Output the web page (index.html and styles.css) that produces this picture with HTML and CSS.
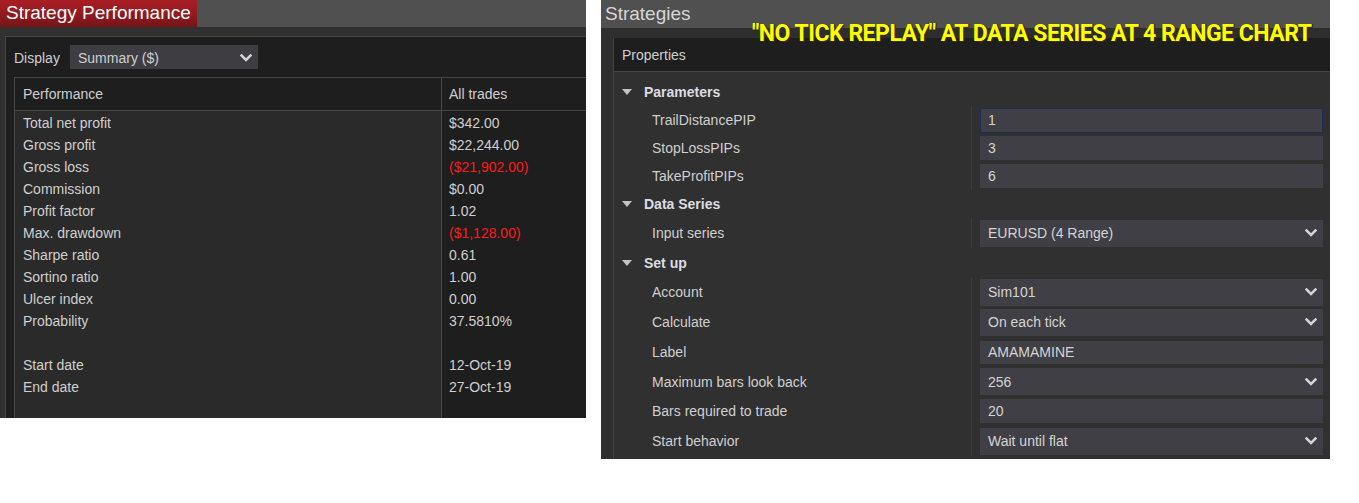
FILE: index.html
```html
<!DOCTYPE html>
<html>
<head>
<meta charset="utf-8">
<link rel="stylesheet" href="styles.css">
</head>
<body>
<div class="page">
  <section class="perf">
    <div class="titlebar"><div class="tab">Strategy Performance</div></div>
    <div class="perf-frame">
      <div class="display-row">
        <span class="display-label">Display</span>
        <div class="select">
          <span>Summary ($)</span>
          <svg class="chev" viewBox="0 0 12 8" width="12" height="8"><polyline points="1.5,1.5 6,6 10.5,1.5"/></svg>
        </div>
      </div>
      <div class="table">
        <div class="thead">
          <div class="th c1">Performance</div>
          <div class="th c2">All trades</div>
        </div>
        <div class="tbody">
          <div class="col c1">
            <div class="cell">Total net profit</div>
            <div class="cell">Gross profit</div>
            <div class="cell">Gross loss</div>
            <div class="cell">Commission</div>
            <div class="cell">Profit factor</div>
            <div class="cell">Max. drawdown</div>
            <div class="cell">Sharpe ratio</div>
            <div class="cell">Sortino ratio</div>
            <div class="cell">Ulcer index</div>
            <div class="cell">Probability</div>
            <div class="cell"></div>
            <div class="cell">Start date</div>
            <div class="cell">End date</div>
          </div>
          <div class="col c2">
            <div class="cell">$342.00</div>
            <div class="cell">$22,244.00</div>
            <div class="cell neg">($21,902.00)</div>
            <div class="cell">$0.00</div>
            <div class="cell">1.02</div>
            <div class="cell neg">($1,128.00)</div>
            <div class="cell">0.61</div>
            <div class="cell">1.00</div>
            <div class="cell">0.00</div>
            <div class="cell">37.5810%</div>
            <div class="cell"></div>
            <div class="cell">12-Oct-19</div>
            <div class="cell">27-Oct-19</div>
          </div>
        </div>
      </div>
    </div>
  </section>

  <section class="strats">
    <div class="titlebar strats-title">Strategies</div>
    <div class="note">"NO TICK REPLAY" AT DATA SERIES AT 4 RANGE CHART</div>
    <div class="props-frame">
      <div class="props-head">Properties</div>
      <div class="props-body">
        <div class="ghead h28"><svg class="tri" viewBox="0 0 10 6" width="10" height="6"><polygon points="0,0 10,0 5,6"/></svg><span>Parameters</span></div>
        <div class="group">
          <div class="prow h28"><div class="plabel">TrailDistancePIP</div><div class="pval"><div class="box focus">1</div></div></div>
          <div class="prow h28"><div class="plabel">StopLossPIPs</div><div class="pval"><div class="box">3</div></div></div>
          <div class="prow h28"><div class="plabel">TakeProfitPIPs</div><div class="pval"><div class="box">6</div></div></div>
        </div>
        <div class="ghead h28"><svg class="tri" viewBox="0 0 10 6" width="10" height="6"><polygon points="0,0 10,0 5,6"/></svg><span>Data Series</span></div>
        <div class="group">
          <div class="prow h30"><div class="plabel">Input series</div><div class="pval"><div class="box tall"><span>EURUSD (4 Range)</span><svg class="chev" viewBox="0 0 12 8" width="12" height="8"><polyline points="1.5,1.5 6,6 10.5,1.5"/></svg></div></div></div>
        </div>
        <div class="ghead h29"><svg class="tri" viewBox="0 0 10 6" width="10" height="6"><polygon points="0,0 10,0 5,6"/></svg><span>Set up</span></div>
        <div class="group">
          <div class="prow h30"><div class="plabel">Account</div><div class="pval"><div class="box tall"><span>Sim101</span><svg class="chev" viewBox="0 0 12 8" width="12" height="8"><polyline points="1.5,1.5 6,6 10.5,1.5"/></svg></div></div></div>
          <div class="prow h30"><div class="plabel">Calculate</div><div class="pval"><div class="box tall"><span>On each tick</span><svg class="chev" viewBox="0 0 12 8" width="12" height="8"><polyline points="1.5,1.5 6,6 10.5,1.5"/></svg></div></div></div>
          <div class="prow h30"><div class="plabel">Label</div><div class="pval"><div class="box short">AMAMAMINE</div></div></div>
          <div class="prow h29"><div class="plabel">Maximum bars look back</div><div class="pval"><div class="box tall"><span>256</span><svg class="chev" viewBox="0 0 12 8" width="12" height="8"><polyline points="1.5,1.5 6,6 10.5,1.5"/></svg></div></div></div>
          <div class="prow h30"><div class="plabel">Bars required to trade</div><div class="pval"><div class="box">20</div></div></div>
          <div class="prow h30"><div class="plabel">Start behavior</div><div class="pval"><div class="box tall"><span>Wait until flat</span><svg class="chev" viewBox="0 0 12 8" width="12" height="8"><polyline points="1.5,1.5 6,6 10.5,1.5"/></svg></div></div></div>
        </div>
      </div>
    </div>
  </section>
</div>
</body>
</html>
```

FILE: styles.css
```css
* { box-sizing: border-box; }

body {
  margin: 0;
  background: #ffffff;
  font-family: "Liberation Sans", Arial, sans-serif;
  font-size: 14px;
  color: #cfcfcf;
}

.page {
  display: flex;
  align-items: flex-start;
  gap: 15px;
}

/* ---------- Strategy Performance ---------- */
.perf {
  width: 586px;
  height: 418px;
  background: #313131;
  display: flex;
  flex-direction: column;
  overflow: hidden;
}

.titlebar {
  flex: none;
  height: 27px;
  background: #505050;
  display: flex;
}

.tab {
  width: 197px;
  height: 27px;
  background: linear-gradient(#a91e24 0%, #921a1f 50%, #761418 100%);
  color: #ffffff;
  font-size: 19px;
  line-height: 26px;
  padding-left: 6px;
  white-space: nowrap;
}

.perf-frame {
  flex: 1;
  margin: 9px 0 0 5px;
  border-top: 1px solid #464646;
  border-left: 1px solid #464646;
  background: #1e1e1e;
  padding: 8px 0 0 8px;
  display: flex;
  flex-direction: column;
}

.display-row {
  display: flex;
  align-items: center;
  gap: 8px;
  height: 24px;
}

.display-label {
  width: 48px;
  flex: none;
  color: #cfcfcf;
  line-height: 24px;
  padding-top: 2px;
  white-space: nowrap;
}

.select {
  width: 188px;
  height: 24px;
  background: #3d3d42;
  display: flex;
  align-items: center;
  justify-content: space-between;
  padding: 2px 6px 0 8px;
}

.chev {
  flex: none;
  fill: none;
  stroke: #d4d4d4;
  stroke-width: 2.5;
  stroke-linecap: square;
}

.table {
  flex: 1;
  margin-top: 8px;
  border-top: 1px solid #464646;
  border-left: 1px solid #464646;
  display: flex;
  flex-direction: column;
}

.thead {
  display: flex;
  height: 33px;
  border-bottom: 1px solid #464646;
  background: #1e1e1e;
}

.th {
  line-height: 32px;
}

.c1 {
  width: 427px;
  flex: none;
  padding-left: 8px;
  border-right: 1px solid #464646;
}

.c2 {
  flex: 1;
  padding-left: 7px;
}

.tbody {
  flex: 1;
  display: flex;
}

.col {
  padding-top: 1px;
}

.col.c1 { background: #2a2a2a; }
.col.c2 { background: #1e1e1e; }

.cell {
  height: 22px;
  line-height: 22px;
}

.neg { color: #ff1a1a; }

/* ---------- Strategies ---------- */
.strats {
  position: relative;
  width: 729px;
  height: 459px;
  background: #2e2e2e;
  display: flex;
  flex-direction: column;
  overflow: hidden;
}

.strats-title {
  height: 28px;
  font-size: 19px;
  line-height: 28px;
  padding-left: 4px;
  color: #d6d6d6;
  display: block;
}

.note {
  position: absolute;
  left: 151px;
  top: 22px;
  font-family: Roboto, "Liberation Sans", sans-serif;
  font-weight: 700;
  font-size: 23px;
  line-height: 23px;
  letter-spacing: -0.5px;
  color: #ffff00;
  text-shadow: 1px 1px 0 #3a2a00, 1px 0 0 #2a2000;
  white-space: nowrap;
  z-index: 2;
}

.props-frame {
  flex: 1;
  margin: 10px 0 0 12px;
  border-left: 1px solid #454545;
  display: flex;
  flex-direction: column;
}

.props-head {
  flex: none;
  height: 34px;
  background: #1e1e1e;
  border-bottom: 1px solid #464646;
  line-height: 33px;
  padding: 1px 0 0 8px;
}

.props-body {
  flex: 1;
  background: #303030;
  padding-top: 6px;
}

.ghead {
  display: flex;
  align-items: center;
  padding: 0 0 0 8px;
  font-weight: 700;
  color: #dcdde2;
}

.tri {
  fill: #c4c4c4;
  margin-right: 12px;
}

.h28 { height: 28px; }
.h29 { height: 29px; }
.h30 { height: 30px; }

.prow {
  display: flex;
}

.plabel {
  width: 357px;
  flex: none;
  padding-left: 38px;
  display: flex;
  align-items: center;
  white-space: nowrap;
}

.pval {
  flex: 1;
  border-left: 1px solid #3c3c3c;
  padding: 0 7px 0 8px;
  display: flex;
  align-items: center;
}

.box {
  width: 343px;
  height: 24px;
  background: #403f45;
  color: #d4d4d4;
  display: flex;
  align-items: center;
  justify-content: space-between;
  padding: 0 6px 0 8px;
}

.box.focus {
  height: 25px;
  border: 1px solid #1e2c58;
  padding-left: 7px;
}

.box.tall { height: 27px; }
.box.short { height: 23px; }
```
